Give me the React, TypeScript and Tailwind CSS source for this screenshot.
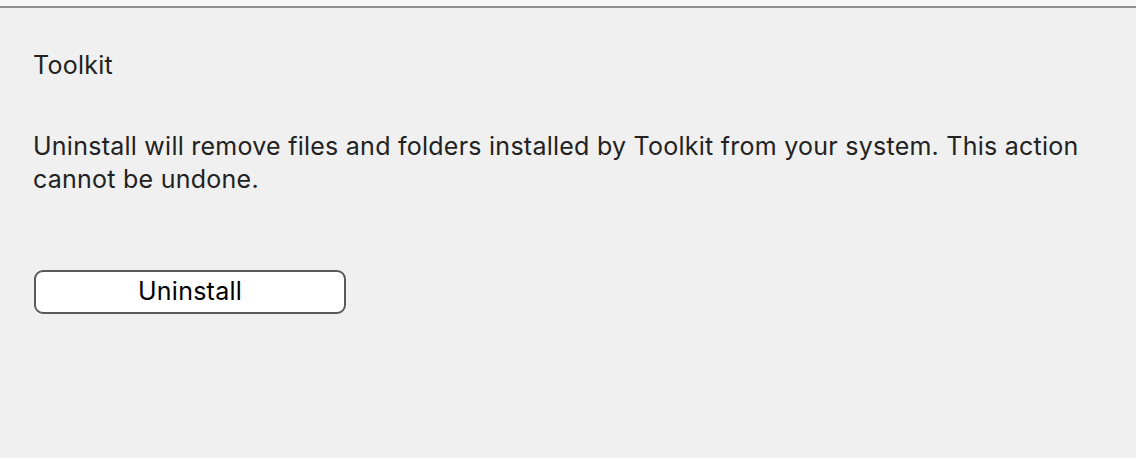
export default function App() {
  return (
    <div className="w-[1136px] h-[458px] bg-[#f0f0f0] flex flex-col overflow-hidden" style={{ fontFamily: 'Inter, "Noto Sans", sans-serif' }}>
      <div className="h-[6px] bg-[#f6f6f6]" />
      <div className="h-[2px] bg-[#8e8e8e]" />
      <div className="px-[33px] pt-[41px] text-[#222] tracking-[0.25px]">
        <div className="text-[25px] leading-[32px]">Toolkit</div>
        <p className="mt-[49px] text-[25px] leading-[33px] max-w-[1075px]">
          Uninstall will remove files and folders installed by Toolkit from your system. This action cannot be undone.
        </p>
        <button className="mt-[74px] ml-[1px] w-[312px] h-[44px] bg-white border-2 border-[#5a5a5a] rounded-[9px] text-[25px] text-black flex items-center justify-center">
          Uninstall
        </button>
      </div>
    </div>
  );
}
